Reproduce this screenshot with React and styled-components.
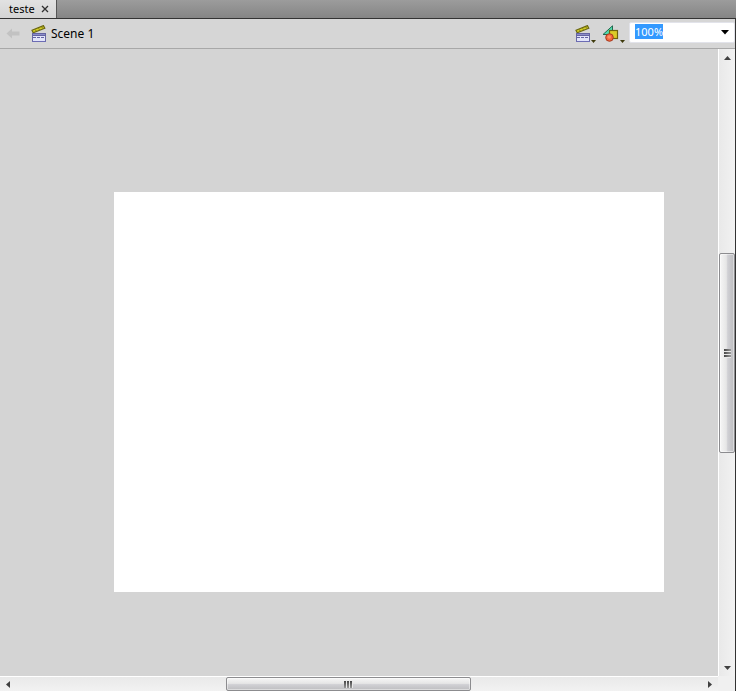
import { useEffect, useRef, useState } from 'react';
import styled, { createGlobalStyle } from 'styled-components';

const ClapperIcon = () => (
  <svg width="16" height="18" viewBox="0 0 16 18" aria-hidden="true">
    <path d="M1 5.2 12.4 .6l1.4 2.6L2.2 7.8z" fill="#d6d024" stroke="#6a6612" strokeWidth="1.2" />
    <path d="M4.4 4.6l.8 1.4M7.6 3.3l.8 1.4M10.8 2l.8 1.4" stroke="#7a7618" strokeWidth="1" />
    <rect x="1.5" y="8.5" width="13" height="8" fill="#e2e4fa" stroke="#6868a4" />
    <path d="M1 9.5h14" stroke="#6464a2" strokeWidth="3" />
    <path d="M2 9.5h12" stroke="#8c8cca" strokeWidth="1" />
    <path d="M2 12.5h12" stroke="#6464a4" strokeDasharray="3 1" />
    <path d="M1 16.5h14" stroke="#6c6cb4" />
  </svg>
);

const ShapesIcon = () => (
  <svg width="18" height="18" viewBox="0 0 18 18" aria-hidden="true">
    <path d="M1 9.5 10.5.8v8.7z" fill="#4fdcae" stroke="#23694f" />
    <rect x="7.5" y="5.5" width="8" height="8" fill="#dccb28" stroke="#6e640f" strokeWidth="1.2" />
    <circle cx="7.5" cy="12.5" r="3.8" fill="#f4663c" stroke="#a83a20" />
    <circle cx="7.2" cy="12" r="1.8" fill="#ff8f66" />
  </svg>
);

const BackIcon = () => (
  <svg width="14" height="11" viewBox="0 0 14 11" aria-hidden="true">
    <path d="M0.5 5.5 6 .5v3h7.5v4H6v3z" fill="#c2c2c2" />
  </svg>
);

const CloseIcon = () => (
  <svg width="8" height="8" viewBox="0 0 8 8" aria-hidden="true">
    <path d="M1 1l6 6M7 1 1 7" stroke="#303030" strokeWidth="1.3" />
  </svg>
);

const Caret = ({ size = 5, color = '#3e3a0c' }) => (
  <svg width={size} height={(size + 1) / 2} viewBox="0 0 10 6" preserveAspectRatio="none" aria-hidden="true">
    <path d="M0 0h10L5 6z" fill={color} />
  </svg>
);

const arrows = {
  up: 'M1 7 4.5 3 8 7z',
  down: 'M1 3h7L4.5 7z',
  left: 'M6 1v7L2 4.5z',
  right: 'M2 1v7l4-3.5z',
};

const Arrow = ({ direction }) => (
  <svg width="9" height="9" viewBox="0 0 9 9" aria-hidden="true">
    <path d={arrows[direction]} fill="#404040" />
  </svg>
);

function ScrollBar({ vertical, before, size, after }) {
  return (
    <Bar $vertical={vertical}>
      <ArrowButton $vertical={vertical} aria-label={vertical ? 'Scroll up' : 'Scroll left'}>
        <Arrow direction={vertical ? 'up' : 'left'} />
      </ArrowButton>
      <Space $grow={before} />
      <Thumb $vertical={vertical} $grow={size}>
        <Grip $vertical={vertical}>
          <i />
          <i />
          <i />
        </Grip>
      </Thumb>
      <Space $grow={after} />
      <ArrowButton $vertical={vertical} aria-label={vertical ? 'Scroll down' : 'Scroll right'}>
        <Arrow direction={vertical ? 'down' : 'right'} />
      </ArrowButton>
    </Bar>
  );
}

function App() {
  const [zoom, setZoom] = useState('100%');
  const zoomInput = useRef(null);

  useEffect(() => {
    zoomInput.current.focus();
    zoomInput.current.select();
  }, []);

  return (
    <Window>
      <GlobalStyle />
      <TabBar>
        <Tab>
          <TabName>teste</TabName>
          <IconButton aria-label="Close teste">
            <CloseIcon />
          </IconButton>
        </Tab>
      </TabBar>
      <Editor>
        <EditBar>
          <IconButton aria-label="Back" disabled>
            <BackIcon />
          </IconButton>
          <Scene>
            <ClapperIcon />
            Scene 1
          </Scene>
          <Tools>
            <MenuButton aria-label="Edit scene">
              <ClapperIcon />
              <Caret />
            </MenuButton>
            <MenuButton aria-label="Edit symbols">
              <ShapesIcon />
              <Caret />
            </MenuButton>
          </Tools>
          <ZoomBox>
            <ZoomInput
              ref={zoomInput}
              aria-label="Zoom"
              value={zoom}
              onChange={(e) => setZoom(e.target.value)}
            />
            <IconButton aria-label="Zoom levels">
              <Caret size={8} color="#000" />
            </IconButton>
          </ZoomBox>
        </EditBar>
        <Work>
          <Pasteboard>
            <Stage />
          </Pasteboard>
          <ScrollBar vertical before={187} size={198} after={206} />
          <ScrollBar before={210} size={243} after={231} />
          <Corner />
        </Work>
      </Editor>
    </Window>
  );
}

export default App;

const GlobalStyle = createGlobalStyle`
* {
  box-sizing: border-box;
}

body {
  margin: 0;
  font-family: "Noto Sans", Tahoma, sans-serif;
  font-size: 12px;
  color: #000;
}

button {
  margin: 0;
  padding: 0;
  border: 0;
  background: none;
}

svg {
  display: block;
}
`;

const Window = styled.div`
display: flex;
flex-direction: column;
min-height: 100vh;
`;

const TabBar = styled.header`
display: flex;
height: 19px;
background: linear-gradient(#9c9c9c, #858585);
border-bottom: 1px solid #333;
`;

const Tab = styled.div`
display: flex;
align-items: center;
gap: 6px;
padding: 0 7px 0 9px;
background: linear-gradient(#e2e2e2, #d4d4d4);
border-right: 1px solid #555;
`;

const TabName = styled.span`
font-size: 11px;
line-height: 18px;
`;

const IconButton = styled.button`
display: flex;
align-items: center;
justify-content: center;
`;

const Editor = styled.main`
display: flex;
flex-direction: column;
flex: 1;
border-right: 1px solid #333;
`;

const EditBar = styled.div`
display: flex;
align-items: center;
height: 30px;
padding-left: 6px;
background: #d6d6d6;
border-bottom: 1px solid #a8a8a8;
`;

const Scene = styled.div`
display: flex;
align-items: center;
gap: 4px;
margin-left: 11px;
`;

const Tools = styled.div`
display: flex;
gap: 6px;
margin-left: auto;
margin-right: 4px;
`;

const MenuButton = styled.button`
display: flex;
align-items: flex-end;
`;

const ZoomBox = styled.div`
display: flex;
align-items: center;
width: 106px;
height: 21px;
margin-bottom: 2px;
padding: 0 5px;
background: #fff;
border: 1px solid #e2e3ea;
border-radius: 2px;
`;

const ZoomInput = styled.input`
flex: 1;
min-width: 0;
height: 15px;
margin-bottom: 2px;
padding: 0;
border: 0;
outline: 0;
background: none;
font-family: inherit;
font-size: 11px;
line-height: 15px;

&::selection {
  background: #3399ff;
  color: #fff;
}
`;

const Work = styled.div`
display: grid;
grid-template-columns: 1fr 17px;
grid-template-rows: 1fr 15px;
flex: 1;
`;

const Pasteboard = styled.div`
padding: 143px 54px 84px 114px;
background: #d4d4d4;
`;

const Stage = styled.div`
aspect-ratio: 11 / 8;
background: #fff;
`;

const Bar = styled.div`
display: flex;
flex-direction: ${(props) => (props.$vertical ? 'column' : 'row')};
background: linear-gradient(${(props) => (props.$vertical ? '90deg' : '180deg')}, #e9e9e9, #f2f2f2);
border: 0 solid #fff;
border-width: ${(props) => (props.$vertical ? '0 0 0 1px' : '1px 0 0')};
`;

const ArrowButton = styled.button`
display: flex;
align-items: center;
justify-content: center;
flex: 0 0 ${(props) => (props.$vertical ? '17px' : '16px')};
`;

const Space = styled.div`
flex: ${(props) => props.$grow} 1 0;
`;

const Thumb = styled.div`
display: flex;
align-items: center;
justify-content: center;
flex: ${(props) => props.$grow} 1 0;
background: linear-gradient(
  ${(props) => (props.$vertical ? '90deg' : '180deg')},
  #f6f6f6, #e6e6e6 45%, #d0d0d4 55%, #bdbdc0
);
border: 1px solid #8c8c8f;
border-radius: 2px;
box-shadow: inset 0 0 0 1px rgba(255, 255, 255, 0.45);
`;

const Grip = styled.div`
display: flex;
flex-direction: ${(props) => (props.$vertical ? 'column' : 'row')};

i {
  width: ${(props) => (props.$vertical ? '7px' : '3px')};
  height: ${(props) => (props.$vertical ? '3px' : '7px')};
  background: linear-gradient(${(props) => (props.$vertical ? '90deg' : '180deg')}, #444, #999);
  background-clip: padding-box;
  border: 0 solid #e8e8e8;
  border-width: ${(props) => (props.$vertical ? '0 0 1px' : '0 1px 0 0')};
}
`;

const Corner = styled.div`
background: #f0f0f0;
`;
